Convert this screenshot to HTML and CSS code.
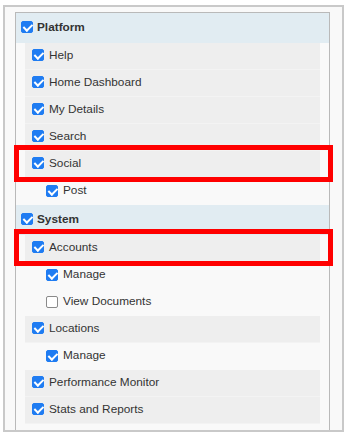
FILE: index.html
```html
<!DOCTYPE html>
<html lang="en">
<head>
    <meta charset="UTF-8">
    <meta name="viewport" content="width=device-width, initial-scale=1.0">
    <title>Permissions</title>
    <link rel="stylesheet" href="styles.css">
</head>
<body>
    <div class="frame">
        <div class="tree">
            <div class="group">
                <div class="group-head"><span class="cb on"></span>Platform</div>
                <ul class="items">
                    <li class="item"><span class="cb on"></span>Help</li>
                    <li class="item"><span class="cb on"></span>Home Dashboard</li>
                    <li class="item"><span class="cb on"></span>My Details</li>
                    <li class="item"><span class="cb on"></span>Search</li>
                    <li class="item marked"><span class="cb on"></span>Social</li>
                    <li class="sub"><span class="cb on"></span>Post</li>
                </ul>
            </div>

            <div class="group">
                <div class="group-head"><span class="cb on"></span>System</div>
                <ul class="items">
                    <li class="item marked"><span class="cb on"></span>Accounts</li>
                    <li class="sub"><span class="cb on"></span>Manage</li>
                    <li class="sub"><span class="cb"></span>View Documents</li>
                    <li class="item"><span class="cb on"></span>Locations</li>
                    <li class="sub"><span class="cb on"></span>Manage</li>
                    <li class="item"><span class="cb on"></span>Performance Monitor</li>
                    <li class="item"><span class="cb on"></span>Stats and Reports</li>
                    <li class="sub"><span class="cb on"></span></li>
                </ul>
            </div>
        </div>
    </div>
</body>
</html>
```

FILE: styles.css
```css
body {
    margin: 0;
    background: white;
    font-family: "Liberation Sans", Arial, sans-serif;
    font-size: 11.8px;
    color: #333;
}
.frame {
    margin: 5px 4px 0 3px;
    height: 423px;
    border: 2px solid #c9c9c9;
    background: #f9f9f9;
    overflow: hidden;
}
.tree {
    margin: 5px 12px 0 10px;
    border: 1px solid #b9b9b9;
    border-bottom: none;
    min-height: 460px;
}
.group-head {
    display: flex;
    align-items: center;
    box-sizing: border-box;
    height: 30px;
    padding: 0 0 3px 5px;
    background: #e1ecf2;
    font-weight: bold;
}
.group-head .cb { margin-right: 4px; }
.items {
    list-style: none;
    margin: 0 9px;
    padding: 0;
}
.item, .sub {
    display: flex;
    align-items: center;
    box-sizing: border-box;
    height: 27px;
    padding-bottom: 3px;
}
.item {
    padding-left: 7px;
    background: #eeeeee;
    border-bottom: 1px solid #f3f3f3;
}
.sub { padding-left: 21px; }
.item .cb, .sub .cb { margin-right: 5px; }
.cb {
    position: relative;
    box-sizing: border-box;
    width: 12px;
    height: 12px;
    margin-top: 1px;
    border: 1px solid #8a8a8a;
    border-radius: 2px;
    background: white;
    flex-shrink: 0;
}
.cb.on {
    border-color: #1f7cf2;
    background: #1f7cf2;
}
.cb.on::after {
    content: "";
    position: absolute;
    left: 3px;
    top: 0;
    width: 3.5px;
    height: 7px;
    border: solid white;
    border-width: 0 2px 2px 0;
    transform: rotate(45deg);
}
.marked { position: relative; }
.marked::after {
    content: "";
    position: absolute;
    left: -11px;
    right: -13px;
    top: -6px;
    bottom: -5px;
    border: 5px solid #ff0000;
}
```
